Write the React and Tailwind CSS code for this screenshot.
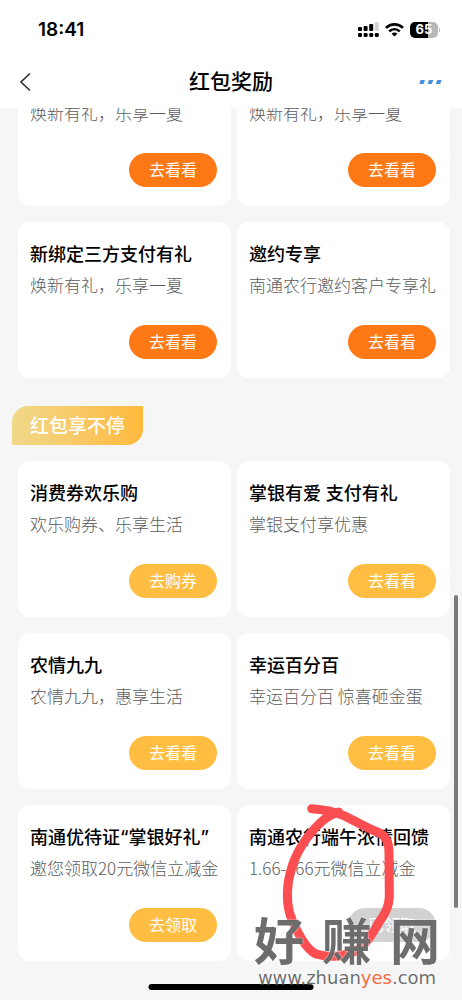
import React from 'react';
import clsx from 'clsx';

const topCards = [
    { desc: '焕新有礼，乐享一夏', action: '去看看' },
    { desc: '焕新有礼，乐享一夏', action: '去看看' },
    { title: '新绑定三方支付有礼', desc: '焕新有礼，乐享一夏', action: '去看看' },
    { title: '邀约专享', desc: '南通农行邀约客户专享礼', action: '去看看' },
];

const moreCards = [
    { title: '消费券欢乐购', desc: '欢乐购券、乐享生活', action: '去购券' },
    { title: '掌银有爱 支付有礼', desc: '掌银支付享优惠', action: '去看看' },
    { title: '农情九九', desc: '农情九九，惠享生活', action: '去看看' },
    { title: '幸运百分百', desc: '幸运百分百 惊喜砸金蛋', action: '去看看' },
    { title: '南通优待证“掌银好礼”', desc: '邀您领取20元微信立减金', action: '去领取' },
    { title: '南通农行端午浓情回馈', desc: '1.66-166元微信立减金', action: '已领取', done: true },
];

const SignalIcon = () => (
    <svg width="21" height="16" viewBox="0 0 21 16" aria-hidden="true">
        <rect x="0" y="5" width="4" height="4" rx="1" />
        <rect x="5.6" y="4" width="4" height="5" rx="1" />
        <rect x="11.2" y="2" width="4" height="7" rx="1" />
        <rect x="16.8" y="0" width="4" height="9" rx="1" fill="#d4d4d4" />
        <rect x="0" y="11" width="4" height="4" rx="1.2" />
        <rect x="5.6" y="11" width="4" height="4" rx="1.2" />
        <rect x="11.2" y="11" width="4" height="4" rx="1.2" />
        <rect x="16.8" y="11" width="4" height="4" rx="1.2" />
    </svg>
);

const WifiIcon = () => (
    <svg width="19" height="14" viewBox="0 0 19 14" fill="none" stroke="#000" strokeWidth="2.6" aria-hidden="true">
        <path d="M1 4.9C5.8.2 13.2.2 18 4.9" />
        <path d="M4.2 8.4C7.3 5.5 11.7 5.5 14.8 8.4" />
        <path d="M9.5 13.6L6.6 10.7C8.2 9.2 10.8 9.2 12.4 10.7Z" fill="#000" stroke="none" />
    </svg>
);

const Battery = () => (
    <div className="flex items-center gap-px">
        <div className="flex h-4 w-7 items-center justify-center rounded-[5px] bg-linear-to-r from-black from-65% to-[#b8b8b8] to-65% text-[13px] font-bold text-white">
            65
        </div>
        <div className="h-1 w-px rounded-r bg-[#b8b8b8]"></div>
    </div>
);

const Card = ({ card, tone }) => (
    <article className="self-end rounded-xl bg-white pt-[19px] pr-[14px] pb-[19px] pl-3">
        {card.title && <h3 className="whitespace-nowrap text-[18px] leading-7 font-medium text-black">{card.title}</h3>}
        <p className="mt-1 whitespace-nowrap font-['Noto_Sans_CJK_SC',sans-serif] text-[17px] leading-6 font-light text-[#5c5c5c]">{card.desc}</p>
        <button
            type="button"
            disabled={card.done}
            className={clsx('mt-7 ml-auto block h-[34px] w-[88px] rounded-full text-[16px] leading-6 text-white', card.done ? 'bg-[#d2d2d2]' : tone)}
        >
            {card.action}
        </button>
    </article>
);

const CardGrid = ({ cards, tone }) => (
    <div className="grid grid-cols-2 gap-x-1.5 gap-y-4 pr-3 pl-[18px]">
        {cards.map((card, i) => (
            <Card key={i} card={card} tone={tone} />
        ))}
    </div>
);

export default function App() {
    return (
        <div lang="zh-CN" className="relative flex h-screen flex-col overflow-hidden bg-[#f6f6f6] font-['Inter','Noto_Sans_CJK_SC',sans-serif]">
            <header className="shrink-0 bg-white">
                <div className="flex h-14 items-center justify-between pt-1 pr-[22px] pl-[38px]">
                    <span className="text-[19px] leading-6 font-semibold text-black">18:41</span>
                    <div className="flex items-center gap-1.5">
                        <SignalIcon />
                        <WifiIcon />
                        <Battery />
                    </div>
                </div>
                <div className="grid h-[52px] grid-cols-[1fr_auto_1fr] items-center px-5">
                    <button type="button" aria-label="返回" className="justify-self-start">
                        <svg width="11" height="18" viewBox="0 0 11 18" fill="none" stroke="#333" strokeWidth="1.6">
                            <path d="M10 .5L1 9l9 8.5" />
                        </svg>
                    </button>
                    <h1 className="text-[21px] leading-8 font-medium text-black">红包奖励</h1>
                    <button type="button" aria-label="更多" className="justify-self-end">
                        <svg width="23" height="4" viewBox="0 0 23 4" fill="#4a90d9">
                            <path d="M1.6 0H6L4.6 4H.2zM9.9 0h4.4l-1.4 4H8.5zM18.2 0h4.4l-1.4 4h-4.4z" />
                        </svg>
                    </button>
                </div>
            </header>

            <main className="flex min-h-0 flex-1 flex-col justify-end overflow-hidden pb-[39px]">
                <CardGrid cards={topCards} tone="bg-[#ff7816]" />
                <h2 className="mt-7 mb-4 ml-3 self-start rounded-tl-[16px] rounded-br-[16px] bg-linear-to-r from-[#f0d888] to-[#ffb93a] px-[18px] pt-[3px] text-[19px] leading-9 font-medium text-white">
                    红包享不停
                </h2>
                <CardGrid cards={moreCards} tone="bg-[#ffbe42]" />
            </main>

            {/* scrollbar thumb */}
            <div className="absolute top-[595px] right-1 h-[313px] w-1 rounded-full bg-[#7b7b7b]"></div>
            {/* home indicator */}
            <div className="absolute bottom-2.5 left-1/2 h-1.5 w-[165px] -translate-x-1/2 rounded-full bg-black"></div>

            {/* hand-drawn marker loop */}
            <svg className="pointer-events-none absolute right-0 bottom-0" width="232" height="210" viewBox="0 0 696 630" fill="none" stroke="#fc4d50" strokeWidth="27" strokeLinecap="round" strokeLinejoin="round" aria-hidden="true">
                <path d="M245 56C275 58 310 64 340 76C375 92 405 112 442 126C468 136 477 155 477 190L478 320C477 350 467 370 450 392C430 425 410 465 375 484C335 502 290 502 258 492C225 475 205 430 188 395C172 360 169 315 176 270C186 215 205 180 232 142C260 107 285 78 326 66" />
            </svg>

            <div className="pointer-events-none absolute right-[22px] bottom-3 w-[186px] text-[#3c3c3c]/75 [text-shadow:0_0_2px_white]">
                <div className="flex justify-between pb-1 text-[50px] leading-11 font-bold">
                    <span>好</span>
                    <span>赚</span>
                    <span>网</span>
                </div>
                <div className="text-center font-['DejaVu_Sans',sans-serif] text-[18px] leading-5">
                    www.zhuan<span className="text-[#f4683c]">yes</span>.com
                </div>
            </div>
        </div>
    );
}
